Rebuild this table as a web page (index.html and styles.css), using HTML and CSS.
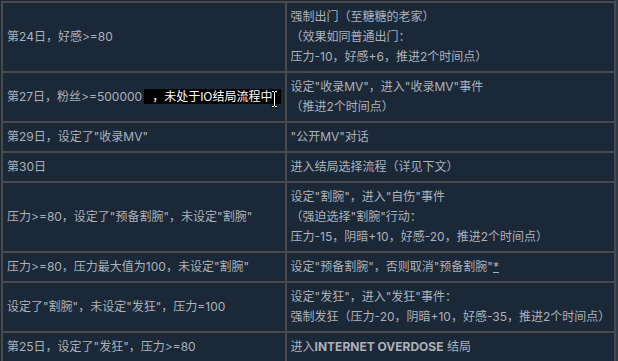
FILE: index.html
```html
<!DOCTYPE html>
<html lang="zh-CN">
<head>
<meta charset="utf-8">
<link rel="stylesheet" href="styles.css">
</head>
<body>
<div class="page">
<table class="guide">
<tr>
<td class="cond">第24日，好感&gt;=80</td>
<td class="eff">强制出门（至糖糖的老家）<br>（效果如同普通出门：<br>压力-10，好感+6，推进2个时间点）</td>
</tr>
<tr>
<td class="cond">第27日，粉丝&gt;=500000<span class="spoiler">，未处于IO结局流程中<svg class="ibeam" width="7" height="18" viewBox="0 0 7 18"><path d="M0.5 0.5h2.5v1h1v-1h2.5v2h-2v13h2v2h-2.5v-1h-1v1h-2.5v-2h2v-13h-2z" fill="#000"/><path d="M1 1h2v1h1v-1h2v1h-2v14h2v1h-2v-1h-1v1h-2v-1h2v-14h-2z" fill="#fff"/></svg></span></td>
<td class="eff">设定"收录MV"，进入"收录MV"事件<br>（推进2个时间点）</td>
</tr>
<tr>
<td class="cond">第29日，设定了"收录MV"</td>
<td class="eff">"公开MV"对话</td>
</tr>
<tr>
<td class="cond">第30日</td>
<td class="eff">进入结局选择流程（详见下文）</td>
</tr>
<tr>
<td class="cond">压力&gt;=80，设定了"预备割腕"，未设定"割腕"</td>
<td class="eff">设定"割腕"，进入"自伤"事件<br>（强迫选择"割腕"行动：<br>压力-15，阴暗+10，好感-20，推进2个时间点）</td>
</tr>
<tr>
<td class="cond">压力&gt;=80，压力最大值为100，未设定"割腕"</td>
<td class="eff">设定"预备割腕"，否则取消"预备割腕"<span class="note">*</span></td>
</tr>
<tr>
<td class="cond">设定了"割腕"，未设定"发狂"，压力=100</td>
<td class="eff">设定"发狂"，进入"发狂"事件：<br>强制发狂（压力-20，阴暗+10，好感-35，推进2个时间点）</td>
</tr>
<tr>
<td class="cond">第25日，设定了"发狂"，压力&gt;=80</td>
<td class="eff">进入<b class="strong">INTERNET OVERDOSE</b> 结局</td>
</tr>
</table>
</div>
</body>
</html>
```
FILE: styles.css
```css
html, body {
  margin: 0;
  padding: 0;
}
body {
  background: #2b3c50;
  font-family: Inter, "Noto Sans CJK SC", sans-serif;
  font-size: 12px;
  color: #acb2b8;
}
.page {
  width: 616px;
  min-height: 361px;
  background: #1b2838;
  border-right: 1px solid #3e4956;
  padding: 1px 0 0 1px;
  box-sizing: border-box;
}
.guide {
  border-collapse: collapse;
  width: 614px;
}
.guide td {
  border: 2px solid #4a4a4a;
  padding: 4px 4px 4px 4px;
  line-height: 20px;
  vertical-align: middle;
  white-space: nowrap;
}
.cond {
  width: 272px;
}
.spoiler {
  position: relative;
  background: #000;
  color: #fff;
  padding: 0 8px;
  margin-left: 2px;
}
.ibeam {
  position: absolute;
  right: 3px;
  top: 1px;
}
.note {
  text-decoration: underline;
}
.strong {
  font-weight: bold;
}
```
